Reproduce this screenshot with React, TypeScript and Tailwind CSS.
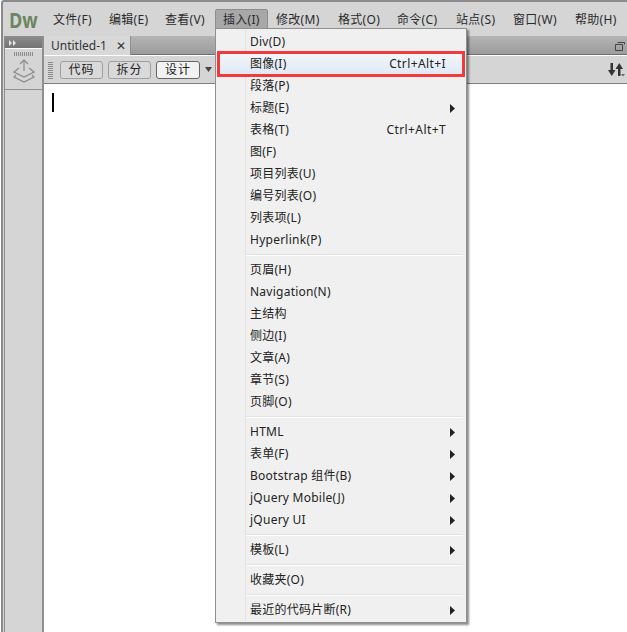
const font = { fontFamily: '"Noto Sans", "Noto Sans CJK SC", sans-serif' };

type Row = { t: string; s?: string; sub?: boolean; hl?: boolean } | 'sep';
const rows: Row[] = [
  { t: 'Div(D)' },
  { t: '图像(I)', s: 'Ctrl+Alt+I', hl: true },
  { t: '段落(P)' },
  { t: '标题(E)', sub: true },
  { t: '表格(T)', s: 'Ctrl+Alt+T' },
  { t: '图(F)' },
  { t: '项目列表(U)' },
  { t: '编号列表(O)' },
  { t: '列表项(L)' },
  { t: 'Hyperlink(P)' },
  'sep',
  { t: '页眉(H)' },
  { t: 'Navigation(N)' },
  { t: '主结构' },
  { t: '侧边(I)' },
  { t: '文章(A)' },
  { t: '章节(S)' },
  { t: '页脚(O)' },
  'sep',
  { t: 'HTML', sub: true },
  { t: '表单(F)', sub: true },
  { t: 'Bootstrap 组件(B)', sub: true },
  { t: 'jQuery Mobile(J)', sub: true },
  { t: 'jQuery UI', sub: true },
  'sep',
  { t: '模板(L)', sub: true },
  'sep',
  { t: '收藏夹(O)' },
  'sep',
  { t: '最近的代码片断(R)', sub: true },
];

const menus: [string, string][] = [
  ['文件(F)', 'w-[56px]'],
  ['编辑(E)', 'w-[56px]'],
  ['查看(V)', 'w-[50px] mr-[7px]'],
  ['插入(I)', 'w-[53px] mr-[1px] bg-[#a8a8a8] border border-[#8c8c8c] rounded-[2px] pl-[6px]'],
  ['修改(M)', 'w-[62px]'],
  ['格式(O)', 'w-[59px]'],
  ['命令(C)', 'w-[59px]'],
  ['站点(S)', 'w-[57px]'],
  ['窗口(W)', 'w-[62px]'],
  ['帮助(H)', 'w-[52px]'],
];

function MenuRow({ r }: { r: Exclude<Row, 'sep'> }) {
  return (
    <div className={`h-[22px] flex items-center relative pl-[33px] pr-[10px] text-[12px] tracking-[0.25px] text-[#222] ${r.hl ? 'bg-gradient-to-b from-[#f4f7fb] to-[#dfe8f3]' : ''}`}>
      <span className="flex-1 whitespace-nowrap">{r.t}</span>
      {r.s && <span className="whitespace-nowrap mr-[9px] tracking-[0.4px]">{r.s}</span>}
      {r.sub && (
        <svg width="5" height="9" viewBox="0 0 5 9"><path d="M0 0 L5 4.5 L0 9 Z" fill="#222" /></svg>
      )}
    </div>
  );
}

export default function App() {
  return (
    <div className="w-[627px] h-[632px] relative overflow-hidden bg-white" style={font}>
      <div className="ml-[1px] border-t-2 border-l-2 border-[#8a8a8a] rounded-tl-[3px] h-[632px] flex flex-col bg-[#d5d5d5]">
        {/* title bar */}
        <div className="h-[34px] shrink-0 flex items-center">
          <span className="ml-[6px] w-[37px] text-[22px] font-bold text-[#6d8560] leading-none scale-x-[0.82] origin-left" style={{ fontFamily: '"Open Sans", sans-serif' }}>Dw</span>
          <div className="flex text-[12px] text-[#2a2a2a] tracking-[0.3px] pt-[1px]">
            {menus.map(([m, c]) => (
              <span key={m} className={`h-[22px] shrink-0 flex items-center pl-[7px] whitespace-nowrap ${c}`}>{m}</span>
            ))}
          </div>
        </div>
        {/* body */}
        <div className="flex flex-1 min-h-0">
          <div className="w-[40px] ml-[1px] shrink-0 flex flex-col border-r-2 border-[#8f8f8f] border-l border-l-[#8f8f8f] border-t border-t-[#8f8f8f]">
            <div className="h-[11px] bg-gradient-to-b from-[#8a8a8a] to-[#747474] flex items-center pl-[4px]">
              <svg width="8" height="6" viewBox="0 0 8 6"><path d="M0 0 L3 3 L0 6 Z M4 0 L7 3 L4 6 Z" fill="#e6e6e6" /></svg>
            </div>
            <div className="h-[42px] border-b border-[#8f8f8f] border-t border-t-white flex flex-col items-center bg-[#d5d5d5]">
              <div className="mt-[3px] h-[4px] w-[19px] bg-[repeating-linear-gradient(90deg,#8a8a8a_0,#8a8a8a_1px,transparent_1px,transparent_2px)]" />
              <svg width="22" height="26" viewBox="0 0 22 26" fill="none" stroke="#8a8a8a" strokeWidth="1.2" className="mt-[3px]">
                <path d="M11 1 L7 5 M11 1 L15 5 M11 1 V12" />
                <path d="M6 9 L1 13 L11 18 L21 13 L16 9" />
                <path d="M3 16 L1 18 L11 23 L21 18 L19 16" />
              </svg>
            </div>
            <div className="flex-1 bg-[#d5d5d5]" />
          </div>
          <div className="flex-1 min-w-0 flex flex-col">
            {/* tabs */}
            <div className="h-[19px] shrink-0 flex bg-gradient-to-b from-[#b4b4b4] to-[#9c9c9c] border-b border-[#6f6f6f] relative">
              <div className="w-[87px] h-[19px] bg-[#d8d8d8] border-r border-[#8f8f8f] flex items-center pl-[7px] text-[12px] text-[#333]">
                <span className="flex-1">Untitled-1</span>
                <span className="mr-[4px] text-[12px] leading-none text-[#333]">✕</span>
              </div>
              <svg width="12" height="10" viewBox="0 0 12 10" className="absolute right-0 top-[6px]" fill="none" stroke="#444"><path d="M2.5 0.5 H9.5 V2.5 M0.5 2.5 H7.5 V8.5 H0.5 Z" /></svg>
            </div>
            {/* toolbar */}
            <div className="h-[29px] shrink-0 flex items-center bg-[#d5d5d5] border-t border-white border-b border-b-[#7f7f7f] relative">
              <div className="ml-[4px] w-[5px] h-[18px] bg-[repeating-linear-gradient(0deg,#8a8a8a_0,#8a8a8a_1px,transparent_1px,transparent_2px)]" />
              <button className="ml-[7px] w-[43px] h-[18px] border border-[#a0a0a0] rounded-[3px] bg-[#d9d9d9] text-[12px] text-[#222] leading-none tracking-[1px]">代码</button>
              <button className="ml-[5px] w-[43px] h-[18px] border border-[#a0a0a0] rounded-[3px] bg-[#d9d9d9] text-[12px] text-[#222] leading-none tracking-[1px]">拆分</button>
              <button className="ml-[5px] w-[44px] h-[18px] border border-[#666] rounded-[3px] bg-[#f2f2f2] text-[12px] text-[#222] leading-none tracking-[1px]">设计</button>
              <svg width="7" height="5" viewBox="0 0 7 5" className="ml-[5px]"><path d="M0 0 H7 L3.5 5 Z" fill="#444" /></svg>
              <svg width="17" height="14" viewBox="0 0 17 14" className="absolute right-[2px] top-[7px]" fill="#333">
                <path d="M2.5 0 H5 V7 H7.5 L3.75 13 L0 7 H2.5 Z M10 13 V6 H7.5 L11.25 0 L15 6 H12.5 V13 Z" />
                <path d="M13 11 H17 L15 13.5 Z" fill="#666" />
              </svg>
            </div>
            {/* doc */}
            <div className="flex-1 bg-white pl-[8px] pt-[9px]">
              <div className="w-[2px] h-[19px] bg-black" />
            </div>
          </div>
        </div>
      </div>

      {/* menu overlay */}
      <div className="absolute left-[215px] top-[28px] w-[252px] h-[595px] bg-[#f0f0f0] border border-[#8f8f8f] pt-[2px] px-[1px] shadow-[2px_2px_2px_rgba(0,0,0,0.45)]">
        <div className="absolute left-[29px] top-[1px] bottom-[1px] w-px bg-[#e2e2e2]" />
        {rows.map((r, i) =>
          r === 'sep' ? (
            <div key={i} className="h-[8px] flex items-center pl-[29px] pr-[2px]"><div className="h-[2px] w-full bg-[#e2e2e2] border-b border-white" /></div>
          ) : (
            <MenuRow key={i} r={r} />
          )
        )}
        <div className="absolute left-[1px] top-[22px] w-[248px] h-[26px] border-[3px] border-[#f23a3a]" />
      </div>
    </div>
  );
}
